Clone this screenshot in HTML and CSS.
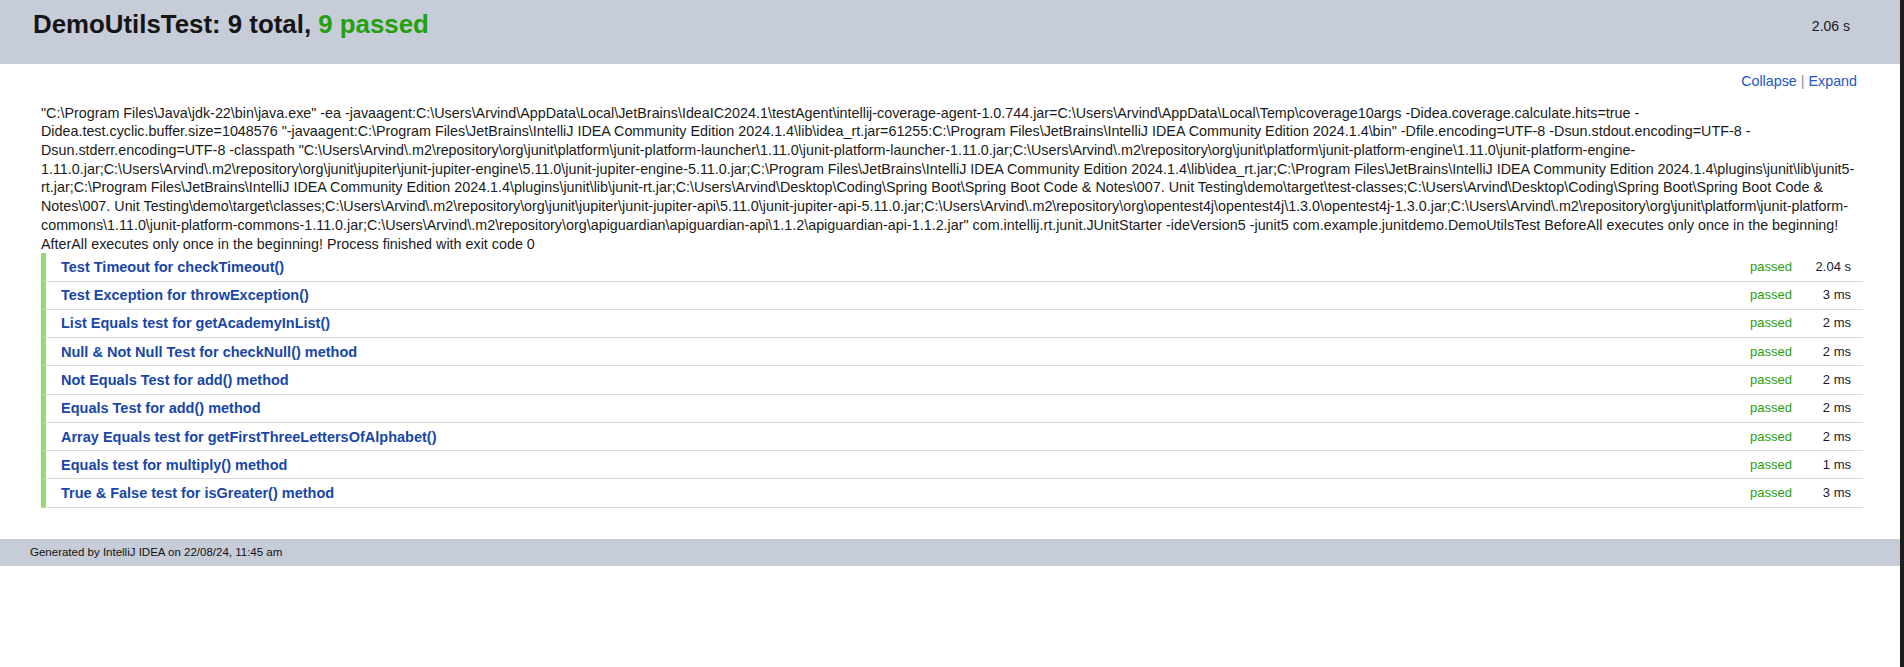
FILE: index.html
```html
<!DOCTYPE html>
<html lang="en">
<head>
<meta charset="utf-8">
<title>Test Results — DemoUtilsTest</title>
<link rel="stylesheet" href="styles.css">
</head>
<body>
<div class="frame">
  <header class="header">
    <h1 class="title">DemoUtilsTest: 9 total, <span class="ok">9 passed</span></h1>
    <div class="total">2.06 s</div>
  </header>
  <main class="content">
    <div class="toolbar"><a class="link" href="#">Collapse</a><span class="sep">|</span><a class="link" href="#">Expand</a></div>
    <div class="cmd">"C:\Program Files\Java\jdk-22\bin\java.exe" -ea -javaagent:C:\Users\Arvind\AppData\Local\JetBrains\IdeaIC2024.1\testAgent\intellij-coverage-agent-1.0.744.jar=C:\Users\Arvind\AppData\Local\Temp\coverage10args -Didea.coverage.calculate.hits=true -Didea.test.cyclic.buffer.size=1048576 "-javaagent:C:\Program Files\JetBrains\IntelliJ IDEA Community Edition 2024.1.4\lib\idea_rt.jar=61255:C:\Program Files\JetBrains\IntelliJ IDEA Community Edition 2024.1.4\bin" -Dfile.encoding=UTF-8 -Dsun.stdout.encoding=UTF-8 -Dsun.stderr.encoding=UTF-8 -classpath "C:\Users\Arvind\.m2\repository\org\junit\platform\junit-platform-launcher\1.11.0\junit-platform-launcher-1.11.0.jar;C:\Users\Arvind\.m2\repository\org\junit\platform\junit-platform-engine\1.11.0\junit-platform-engine-1.11.0.jar;C:\Users\Arvind\.m2\repository\org\junit\jupiter\junit-jupiter-engine\5.11.0\junit-jupiter-engine-5.11.0.jar;C:\Program Files\JetBrains\IntelliJ IDEA Community Edition 2024.1.4\lib\idea_rt.jar;C:\Program Files\JetBrains\IntelliJ IDEA Community Edition 2024.1.4\plugins\junit\lib\junit5-rt.jar;C:\Program Files\JetBrains\IntelliJ IDEA Community Edition 2024.1.4\plugins\junit\lib\junit-rt.jar;C:\Users\Arvind\Desktop\Coding\Spring Boot\Spring Boot Code &amp; Notes\007. Unit Testing\demo\target\test-classes;C:\Users\Arvind\Desktop\Coding\Spring Boot\Spring Boot Code &amp; Notes\007. Unit Testing\demo\target\classes;C:\Users\Arvind\.m2\repository\org\junit\jupiter\junit-jupiter-api\5.11.0\junit-jupiter-api-5.11.0.jar;C:\Users\Arvind\.m2\repository\org\opentest4j\opentest4j\1.3.0\opentest4j-1.3.0.jar;C:\Users\Arvind\.m2\repository\org\junit\platform\junit-platform-commons\1.11.0\junit-platform-commons-1.11.0.jar;C:\Users\Arvind\.m2\repository\org\apiguardian\apiguardian-api\1.1.2\apiguardian-api-1.1.2.jar" com.intellij.rt.junit.JUnitStarter -ideVersion5 -junit5 com.example.junitdemo.DemoUtilsTest BeforeAll executes only once in the beginning! AfterAll executes only once in the beginning! Process finished with exit code 0</div>
    <div class="tests">
      <div class="row"><a class="name" href="#">Test Timeout for checkTimeout()</a><span class="status">passed</span><span class="dur">2.04 s</span></div>
      <div class="row"><a class="name" href="#">Test Exception for throwException()</a><span class="status">passed</span><span class="dur">3 ms</span></div>
      <div class="row"><a class="name" href="#">List Equals test for getAcademyInList()</a><span class="status">passed</span><span class="dur">2 ms</span></div>
      <div class="row"><a class="name" href="#">Null &amp; Not Null Test for checkNull() method</a><span class="status">passed</span><span class="dur">2 ms</span></div>
      <div class="row"><a class="name" href="#">Not Equals Test for add() method</a><span class="status">passed</span><span class="dur">2 ms</span></div>
      <div class="row"><a class="name" href="#">Equals Test for add() method</a><span class="status">passed</span><span class="dur">2 ms</span></div>
      <div class="row"><a class="name" href="#">Array Equals test for getFirstThreeLettersOfAlphabet()</a><span class="status">passed</span><span class="dur">2 ms</span></div>
      <div class="row"><a class="name" href="#">Equals test for multiply() method</a><span class="status">passed</span><span class="dur">1 ms</span></div>
      <div class="row"><a class="name" href="#">True &amp; False test for isGreater() method</a><span class="status">passed</span><span class="dur">3 ms</span></div>
    </div>
  </main>
  <footer class="footer">Generated by IntelliJ IDEA on 22/08/24, 11:45 am</footer>
</div>
</body>
</html>
```
FILE: styles.css
```css
html, body {
  margin: 0;
  padding: 0;
  background: #ffffff;
}

body {
  font-family: "Liberation Sans", Arial, Helvetica, sans-serif;
  font-size: 14px;
  color: #1a1a1a;
}

.frame {
  min-height: 100vh;
  box-sizing: border-box;
  border-right: 4px solid #1e1e1e;
}

.header {
  background: #c6ccd8;
  height: 64px;
  box-sizing: border-box;
  display: flex;
  justify-content: space-between;
  align-items: flex-start;
  padding: 9px 50px 0 33px;
}

.title {
  margin: 0;
  font-size: 25.85px;
  line-height: 30px;
  font-weight: bold;
  color: #151515;
}

.ok {
  color: #23a00c;
}

.total {
  margin-top: 9px;
  font-size: 14px;
  line-height: 16px;
  color: #1a1a1a;
}

.content {
  padding: 0 37px 0 41px;
}

.toolbar {
  display: flex;
  justify-content: flex-end;
  gap: 4px;
  margin-top: 9px;
  padding-right: 6px;
  font-size: 14.3px;
  line-height: 16px;
}

.link {
  color: #1f56c2;
  text-decoration: none;
}

.sep {
  color: #7f8da8;
}

.cmd {
  margin-top: 14.6px;
  margin-right: 3px;
  font-size: 14.34px;
  line-height: 18.7px;
  color: #1a1a1a;
}

.tests {
  display: flex;
  flex-direction: column;
}

.row {
  display: flex;
  align-items: center;
  border-left: 5px solid #93db70;
  border-bottom: 1px solid #d8d8d8;
  padding: 5.6px 12px 5.6px 15px;
  line-height: 16.1px;
}

.name {
  flex: 1;
  font-size: 14.5px;
  font-weight: bold;
  color: #1846a8;
  text-decoration: none;
}

.status {
  font-size: 13px;
  color: #2aa00e;
  text-align: right;
}

.dur {
  width: 59px;
  font-size: 13px;
  text-align: right;
  color: #1a1a2a;
}

.footer {
  margin-top: 31px;
  background: #c6ccd8;
  height: 27px;
  line-height: 27px;
  padding-left: 30px;
  font-size: 11.5px;
  color: #111111;
}
```
